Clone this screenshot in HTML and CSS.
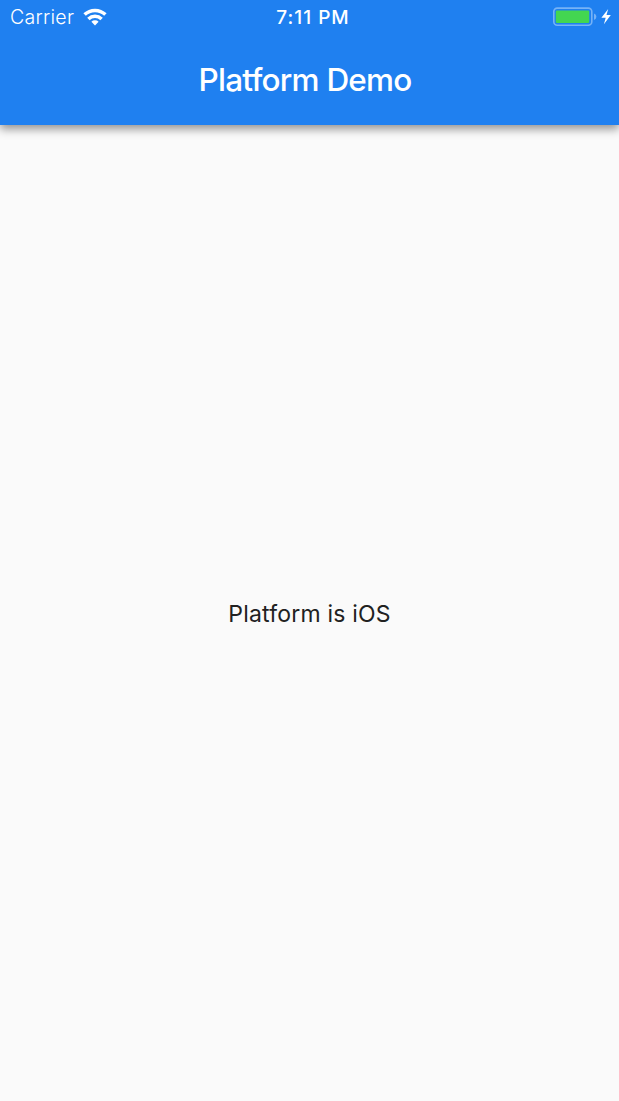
FILE: index.html
```html
<!DOCTYPE html>
<html lang="en">
<head>
<meta charset="utf-8">
<title>Platform Demo</title>
<link rel="stylesheet" href="styles.css">
</head>
<body>
<div class="screen">
  <header class="app-bar">
    <div class="status">
      <div class="status-left">
        <span class="carrier">Carrier</span>
        <svg class="wifi" width="24" height="18" viewBox="0 0 24 18" fill="none" stroke="#fff" stroke-width="3.5">
          <path d="M1.6 6.6a15 15 0 0 1 20.8 0"/>
          <path d="M5.4 10.9a9.6 9.6 0 0 1 13.2 0"/>
          <path d="M12 17.5l-3.6-3.7a5.2 5.2 0 0 1 7.2 0z" fill="#fff" stroke="none"/>
        </svg>
      </div>
      <span class="time">7:11 PM</span>
      <div class="status-right">
        <svg width="60" height="20" viewBox="0 0 60 20">
          <rect x="1.8" y="1.1" width="38" height="17.2" rx="3.5" fill="none" stroke="#76b2f6" stroke-width="1.6"/>
          <rect x="3.8" y="3.6" width="33.4" height="12.4" rx="1.2" fill="#43d651"/>
          <path d="M42 6.6q2.4 1 2.4 3.2t-2.4 3.2z" fill="#76b2f6"/>
          <path d="M56.2 2l-6.8 8.8h4.3l-1.8 6.4 6.9-9.2h-4.3z" fill="#fff"/>
        </svg>
      </div>
    </div>
    <h1 class="title">Platform Demo</h1>
  </header>
  <main class="content"><p class="message">Platform is iOS</p></main>
</div>
</body>
</html>
```
FILE: styles.css
```css
body { margin: 0; }
.screen {
  display: flex;
  flex-direction: column;
  height: 1101px;
  background: #fafafa;
  font-family: Inter, "Liberation Sans", sans-serif;
  overflow: hidden;
}
.app-bar {
  flex: none;
  height: 125px;
  background: #1f80f0;
  color: #fff;
  box-shadow: 0 4px 9px rgba(0, 0, 0, 0.42);
}
.status {
  display: grid;
  grid-template-columns: 1fr auto 1fr;
  align-items: center;
  height: 34px;
}
.status-left { display: flex; align-items: center; gap: 9px; padding-left: 10px; }
.carrier { font-size: 19.5px; font-weight: 300; letter-spacing: 0.3px; line-height: 34px; }
.wifi { display: block; }
.time { font-size: 19px; font-weight: 500; letter-spacing: 1px; padding-left: 7px; }
.status-right { display: flex; justify-content: flex-end; padding-right: 7px; }
.title {
  margin: 0;
  padding-right: 9px;
  line-height: 91px;
  text-align: center;
  font-size: 31.5px;
  font-weight: 500;
  letter-spacing: -0.8px;
  font-feature-settings: "liga" 0, "calt" 0;
}
.content { flex: 1; display: flex; align-items: center; justify-content: center; padding-top: 2px; }
.message {
  margin: 0;
  font-size: 23px;
  color: #212121;
  letter-spacing: 0.2px;
  font-feature-settings: "liga" 0, "calt" 0;
}
```
